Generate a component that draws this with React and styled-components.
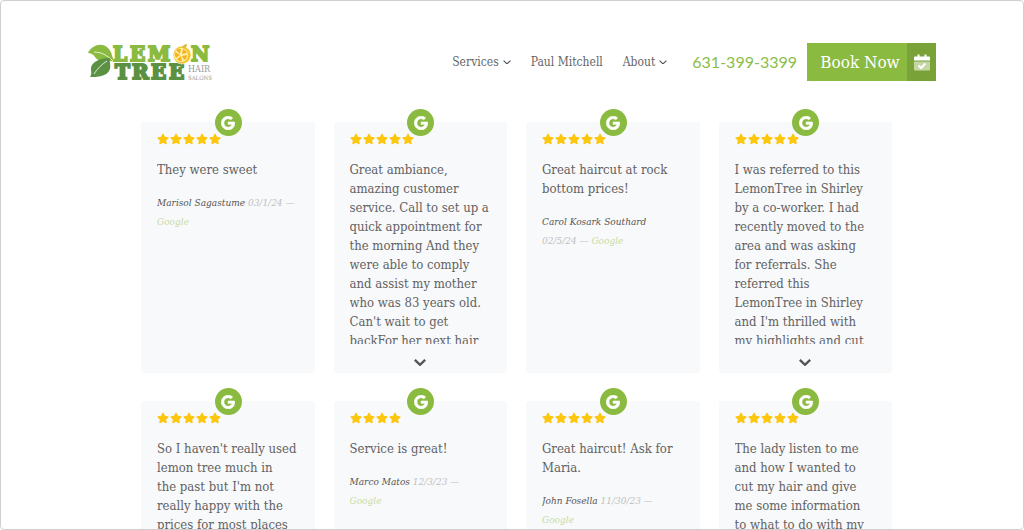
import React from "react";
import styled, { createGlobalStyle } from "styled-components";
import { FaGoogle, FaStar } from "react-icons/fa";

const GlobalStyle = createGlobalStyle`
  * {
    box-sizing: border-box;
  }
  body {
    margin: 0;
    background: #fff;
    color: #626262;
    font-family: "DejaVu Serif Condensed", "DejaVu Serif", serif;
  }
`;

const Page = styled.div`
  height: 100vh;
  overflow: hidden;
  border: 1px solid #cfcfcf;
  border-radius: 4px;
`;

const Header = styled.header`
  display: flex;
  align-items: center;
  padding: 37px 87px 0;
`;

const LogoLink = styled.a`
  display: block;
  height: 48px;
  margin-right: auto;
`;

const Nav = styled.nav`
  display: flex;
  gap: 20px;
  margin-right: 25px;
`;

const NavLink = styled.a`
  display: flex;
  align-items: center;
  gap: 4px;
  color: #666;
  font-size: 12px;
  line-height: 20px;
  white-space: nowrap;
  text-decoration: none;
`;

const Phone = styled.a`
  margin-right: 10px;
  color: #8bbd45;
  font-family: Lato, sans-serif;
  font-size: 16px;
  line-height: 20px;
  white-space: nowrap;
  text-decoration: none;
`;

const BookButton = styled.button`
  display: flex;
  align-items: stretch;
  height: 38px;
  padding: 0;
  border: 0;
  background: #8aba3f;
  color: #fff;
  font-family: inherit;
  font-size: 17px;
  cursor: pointer;
`;

const BookLabel = styled.span`
  width: 100px;
  padding-left: 6px;
  line-height: 38px;
  text-align: center;
  white-space: nowrap;
`;

const BookIcon = styled.span`
  display: flex;
  align-items: center;
  justify-content: center;
  width: 29px;
  background: #79a339;
`;

const Reviews = styled.main`
  display: grid;
  grid-template-columns: repeat(4, 1fr);
  gap: 28px 19px;
  padding: 36px 131px 0 140px;
`;

const Card = styled.article`
  position: relative;
  height: 251px;
  padding: 11px 16px 0;
  border-radius: 3px;
  background: #f8f9fb;
`;

const Badge = styled.span`
  position: absolute;
  top: -13px;
  left: 50%;
  display: flex;
  align-items: center;
  justify-content: center;
  width: 27px;
  height: 27px;
  margin-left: -13px;
  border-radius: 50%;
  background: #8aba3f;
  color: #fff;

  path {
    stroke: #fff;
    stroke-width: 24px;
  }
`;

const Stars = styled.div`
  display: flex;
  gap: 1px;
  height: 12px;
  color: #fdc60f;
`;

const Body = styled.div`
  height: 184px;
  margin-top: 15px;
  overflow: hidden;
`;

const Quote = styled.p`
  margin: 0;
  font-size: 13px;
  line-height: 19px;
  white-space: pre;
`;

const Meta = styled.p`
  margin: 14px 0 0;
  color: #c0c0c0;
  font-size: 10px;
  font-style: italic;
  line-height: 19px;
  white-space: pre;
`;

const Author = styled.span`
  color: #555;
`;

const SourceLink = styled.a`
  color: #c9dba4;
  text-decoration: none;
`;

const MoreButton = styled.button`
  display: block;
  margin: 11px auto 0;
  padding: 4px;
  border: 0;
  background: none;
  line-height: 0;
  cursor: pointer;
`;

const reviews = [
  { stars: 5, text: "They were sweet", author: "Marisol Sagastume", date: " 03/1/24 —\n" },
  {
    stars: 5,
    more: true,
    text: "Great ambiance,\namazing customer\nservice. Call to set up a\nquick appointment for\nthe morning And they\nwere able to comply\nand assist my mother\nwho was 83 years old.\nCan't wait to get\nbackFor her next hair",
  },
  { stars: 5, text: "Great haircut at rock\nbottom prices!", author: "Carol Kosark Southard", date: "\n02/5/24 — " },
  {
    stars: 5,
    more: true,
    text: "I was referred to this\nLemonTree in Shirley\nby a co-worker. I had\nrecently moved to the\narea and was asking\nfor referrals. She\nreferred this\nLemonTree in Shirley\nand I'm thrilled with\nmy highlights and cut",
  },
  {
    stars: 5,
    more: true,
    text: "So I haven't really used\nlemon tree much in\nthe past but I'm not\nreally happy with the\nprices for most places",
  },
  { stars: 4, text: "Service is great!", author: "Marco Matos", date: " 12/3/23 —\n" },
  { stars: 5, text: "Great haircut! Ask for\nMaria.", author: "John Fosella", date: " 11/30/23 —\n" },
  {
    stars: 5,
    more: true,
    text: "The lady listen to me\nand how I wanted to\ncut my hair and give\nme some information\nto what to do with my",
  },
];

function Chevron({ width, stroke }) {
  return (
    <svg width={width} height={width * 0.6} viewBox="0 0 10 6" fill="none" stroke="#555" strokeWidth={stroke}>
      <path d="M0.7 0.7 L5 4.8 L9.3 0.7" />
    </svg>
  );
}

function CalendarIcon() {
  return (
    <svg width="16" height="17" viewBox="0 0 16 17">
      <path d="M1 2.5h14a1 1 0 0 1 1 1V6.5H0V3.5a1 1 0 0 1 1-1Z" fill="#fff" />
      <path d="M3.5 0.5h2v3h-2zM10.5 0.5h2v3h-2z" fill="#fff" />
      <path d="M0 7.5h16v8a1 1 0 0 1-1 1H1a1 1 0 0 1-1-1Z" fill="#c3d6a3" />
      <path d="M4.5 11.5l2.5 2.5 4.5-4.5" fill="none" stroke="#fff" strokeWidth="2" />
    </svg>
  );
}

function Logo() {
  return (
    <svg width="126" height="48" viewBox="0 -5 126 48" fontFamily="DejaVu Serif" fontWeight="bold">
      <path d="M0 10 C4 2 14 -1 20 5 C24 9 24 14 26 18 C20 18 11 20 7 14 C5 11 3 10 0 10Z" fill="#8aba3f" />
      <path d="M6 9 C13 9 19 12 25 18" stroke="#fff" strokeWidth="0.8" fill="none" />
      <path d="M22 15 C14 15 3 18 3 26 C3 29 4 31 2 34 C9 34 19 34 22 26 C23 22 21 19 22 15Z" fill="#5b9142" />
      <path d="M6 31 C9 26 14 21 19 18" stroke="#fff" strokeWidth="0.8" fill="none" />
      <g fill="#8aba3f" stroke="#8aba3f" strokeWidth="2" fontSize="20">
        <text x="25" y="18">L</text>
        <text x="42" y="18">E</text>
        <text x="60" y="18">M</text>
        <text x="103" y="18">N</text>
      </g>
      <g fill="#5b9142" stroke="#5b9142" strokeWidth="2" fontSize="20">
        <text x="27" y="36">T</text>
        <text x="44" y="36">R</text>
        <text x="63" y="36">E</text>
        <text x="81" y="36">E</text>
      </g>
      <circle cx="94" cy="12" r="9" fill="#f5c52c" stroke="#fff" strokeWidth="0.6" />
      <circle cx="93" cy="12" r="7" fill="#fff0b0" />
      <g fill="#f2b51f">
        <path d="M92 11 L88 7 Q91 5 93 6Z" />
        <path d="M94 11 L95 6 Q98 7 99 10Z" />
        <path d="M94 13 L99 12 Q99 16 96 17Z" />
        <path d="M93 13 L94 18 Q90 18 89 16Z" />
        <path d="M92 12 L87 9 Q86 12 88 15Z" />
      </g>
      <path d="M94 4 Q96 1 99 1 Q99 4 96 5Z" fill="#d9b93a" />
      <g fill="#999" fontWeight="normal" fontFamily="DejaVu Serif Condensed, DejaVu Serif">
        <text x="100" y="29" fontSize="9">HAIR</text>
        <text x="100" y="37" fontSize="6">SALONS</text>
      </g>
    </svg>
  );
}

function Review({ review }) {
  return (
    <Card>
      <Badge>
        <FaGoogle size={14} />
      </Badge>
      <Stars role="img" aria-label={`${review.stars} stars`}>
        {Array.from({ length: review.stars }, (_, i) => (
          <FaStar key={i} size={12} />
        ))}
      </Stars>
      <Body>
        <Quote>{review.text}</Quote>
        {review.author && (
          <Meta>
            <Author>{review.author}</Author>
            {review.date}
            <SourceLink href="#">Google</SourceLink>
          </Meta>
        )}
      </Body>
      {review.more && (
        <MoreButton type="button" aria-label="Read more">
          <Chevron width={12} stroke={2} />
        </MoreButton>
      )}
    </Card>
  );
}

function App() {
  return (
    <Page>
      <GlobalStyle />
      <Header>
        <LogoLink href="#" aria-label="Lemon Tree Hair Salons">
          <Logo />
        </LogoLink>
        <Nav>
          <NavLink href="#">
            Services <Chevron width={8} stroke={1.5} />
          </NavLink>
          <NavLink href="#">Paul Mitchell</NavLink>
          <NavLink href="#">
            About <Chevron width={8} stroke={1.5} />
          </NavLink>
        </Nav>
        <Phone href="tel:631-399-3399">631-399-3399</Phone>
        <BookButton type="button">
          <BookLabel>Book Now</BookLabel>
          <BookIcon>
            <CalendarIcon />
          </BookIcon>
        </BookButton>
      </Header>
      <Reviews>
        {reviews.map((review, i) => (
          <Review key={i} review={review} />
        ))}
      </Reviews>
    </Page>
  );
}

export default App;
